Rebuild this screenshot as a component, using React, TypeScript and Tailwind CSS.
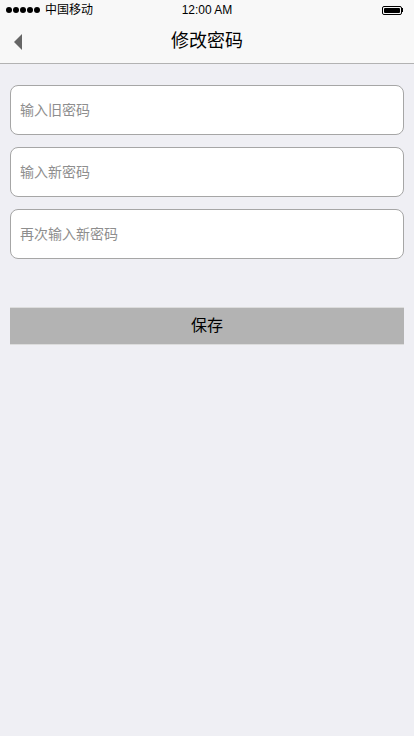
import React from 'react';

const FONT = '"Helvetica Neue", "Liberation Sans", "Noto Sans CJK SC", sans-serif';

function StatusBar() {
  return (
    <div className="relative flex items-center h-5 px-[6px] text-[12px] text-black bg-[#f8f8f8]">
      <div className="flex items-center gap-[1px]">
        {[0, 1, 2, 3, 4].map((i) => (
          <span key={i} className="w-[6px] h-[6px] rounded-full bg-black" />
        ))}
      </div>
      <span className="ml-[5px]">中国移动</span>
      <span className="absolute left-0 right-0 text-center pointer-events-none">12:00 AM</span>
      <div className="ml-auto flex items-center mr-[5px]">
        <div className="w-[20px] h-[9px] border border-black rounded-[2px] p-[1px]">
          <div className="w-full h-full bg-black rounded-[1px]" />
        </div>
        <div className="w-[1.5px] h-[4px] bg-black" />
      </div>
    </div>
  );
}

function NavBar() {
  return (
    <div className="relative flex items-center justify-center h-11 bg-[#f8f8f8] border-b border-[#b2b2b2]">
      <button className="absolute left-[13px] top-[13px]">
        <svg width="10" height="18" viewBox="0 0 10 18">
          <path d="M9 1 L1 9 L9 17 Z" fill="#666" />
        </svg>
      </button>
      <span className="text-[18px] text-black">修改密码</span>
    </div>
  );
}

function Field({ placeholder }: { placeholder: string }) {
  return (
    <input
      type="password"
      placeholder={placeholder}
      className="w-full h-[50px] px-[9px] bg-white border border-[#a6a6a6] rounded-[8px] text-[14px] placeholder:text-[#8e8e8e] outline-none"
      style={{ fontFamily: FONT }}
    />
  );
}

export default function App() {
  return (
    <div className="w-[414px] h-[736px] bg-[#efeff4] flex flex-col" style={{ fontFamily: FONT }}>
      <StatusBar />
      <NavBar />

      <div className="flex flex-col gap-3 px-[10px] pt-[21px]">
        <Field placeholder="输入旧密码" />
        <Field placeholder="输入新密码" />
        <Field placeholder="再次输入新密码" />
      </div>

      <div className="px-[10px] mt-12">
        <button className="w-full h-[38px] bg-[#b3b3b3] border-y border-[#dcdcdc] text-[16px] text-black">
          保存
        </button>
      </div>
    </div>
  );
}
